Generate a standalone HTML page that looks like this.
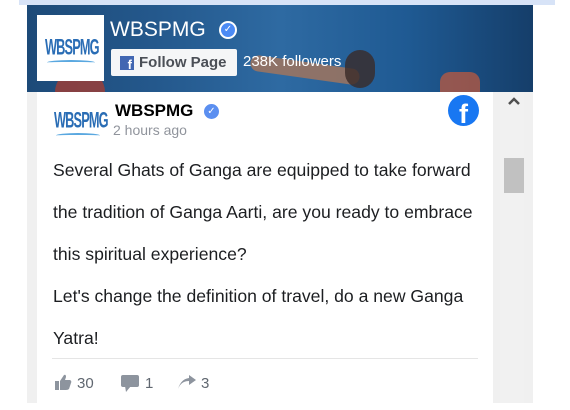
<!DOCTYPE html>
<html><head><style>
*{margin:0;padding:0;box-sizing:border-box}
body{width:570px;height:410px;background:#fff;position:relative;overflow:hidden;font-family:"Liberation Sans",Arial,sans-serif}
.a{position:absolute}
</style></head><body>
<div class="a" style="left:19px;top:0;width:536px;height:5px;background:#d7e3f7"></div>
<div class="a" style="left:27px;top:5px;width:506px;height:398px;background:#f0f0f0"></div>
<div class="a" style="left:27px;top:5px;width:506px;height:87px;background:linear-gradient(90deg,#1d4a78 0%,#24588c 25%,#2e6aa2 50%,#1f5a93 75%,#153e6a 100%)"></div>
<div class="a" style="left:55px;top:70px;width:50px;height:22px;background:#b33a2a;border-radius:30px 30px 0 0;opacity:.7"></div>
<div class="a" style="left:250px;top:62px;width:110px;height:16px;background:#a8765a;border-radius:10px;transform:rotate(8deg);opacity:.8"></div>
<div class="a" style="left:345px;top:50px;width:30px;height:38px;background:#3a2a28;border-radius:15px;opacity:.8"></div>
<div class="a" style="left:440px;top:72px;width:40px;height:20px;background:#c75a3a;border-radius:10px 10px 0 0;opacity:.7"></div>
<div class="a" style="left:37px;top:15px;width:67px;height:66px;background:#fff"></div>
<div class="a" style="left:45px;top:35px;color:#2a6db5;font:bold 15px 'Liberation Sans Narrow','Liberation Sans',sans-serif;letter-spacing:-1px;transform:scale(.85,1.5);transform-origin:left top">WBSPMG</div>
<div class="a" style="left:47px;top:60px;width:48px;height:5px;border-top:2px solid #5aa8e0;border-radius:50%"></div>
<div class="a" style="left:110px;top:18px;color:#fff;font-size:21px">WBSPMG</div>
<div class="a" style="left:219px;top:21px;width:18px;height:18px;border-radius:50%;background:#fff"></div>
<div class="a" style="left:221px;top:23px;width:14px;height:14px;border-radius:50%;background:#4c8bf5;color:#fff;font-size:10px;text-align:center;line-height:14px">✓</div>
<div class="a" style="left:111px;top:49px;width:126px;height:27px;background:#f5f6f7;border-radius:2px"></div>
<div class="a" style="left:120px;top:56px;width:14px;height:14px;background:#4267b2;color:#fff;font:bold 13px 'Liberation Sans';text-align:right;padding-right:2px;line-height:17px;overflow:hidden">f</div>
<div class="a" style="left:139px;top:54px;color:#4b4f56;font:bold 15px 'Liberation Sans'">Follow Page</div>
<div class="a" style="left:243px;top:53px;color:#fff;font-size:15px">238K followers</div>
<div class="a" style="left:37px;top:92px;width:456px;height:311px;background:#fff"></div>
<div class="a" style="left:500px;top:92px;width:24px;height:311px;background:#f1f1f1"></div>
<div class="a" style="left:504px;top:158px;width:20px;height:35px;background:#c1c1c1"></div>
<svg class="a" style="left:508px;top:97px" width="12" height="8"><path d="M1 7 L6 2 L11 7" fill="none" stroke="#505050" stroke-width="2.5"/></svg>
<div class="a" style="left:54px;top:108px;color:#2a6db5;font:bold 15px 'Liberation Sans Narrow','Liberation Sans',sans-serif;letter-spacing:-1px;transform:scale(.85,1.5);transform-origin:left top">WBSPMG</div>
<div class="a" style="left:56px;top:133px;width:44px;height:5px;border-top:2px solid #5aa8e0;border-radius:50%"></div>
<div class="a" style="left:115px;top:101px;color:#000;font:bold 17px 'Liberation Sans'">WBSPMG</div>
<div class="a" style="left:204px;top:104px;width:15px;height:15px;border-radius:50%;background:#5b8ff0;color:#fff;font-size:10px;text-align:center;line-height:15px">✓</div>
<div class="a" style="left:113px;top:122px;color:#90949c;font-size:14px">2 hours ago</div>
<div class="a" style="left:448px;top:95px;width:31px;height:31px;border-radius:50%;background:#1877f2;color:#fff;font:bold 27px 'Liberation Sans';text-align:center;line-height:38px;overflow:hidden">f</div>
<div class="a" style="left:53px;top:149px;color:#1c1e21;font-size:17.6px;line-height:42px;width:440px;white-space:nowrap">Several Ghats of Ganga are equipped to take forward<br>the tradition of Ganga Aarti, are you ready to embrace<br>this spiritual experience?<br>Let's change the definition of travel, do a new Ganga<br>Yatra!</div>
<div class="a" style="left:52px;top:358px;width:426px;height:1px;background:#e5e5e5"></div>
<svg class="a" style="left:55px;top:374px" width="17" height="16" viewBox="0 0 17 16"><rect x="0" y="7" width="4" height="9" fill="#8d949e"/><path d="M5 7 L9 1 Q11 0 11 3 L10 6 L15 6 Q17 7 16 9 L14 15 Q13 16 11 16 L5 16 Z" fill="#8d949e"/></svg>
<div class="a" style="left:77px;top:375px;color:#606770;font-size:15px">30</div>
<svg class="a" style="left:121px;top:375px" width="18" height="17" viewBox="0 0 18 17"><rect x="0" y="0" width="18" height="12" rx="2" fill="#8d949e"/><path d="M4 11 L5 17 L10 11 Z" fill="#8d949e"/></svg>
<div class="a" style="left:145px;top:375px;color:#606770;font-size:15px">1</div>
<svg class="a" style="left:178px;top:375px" width="18" height="14" viewBox="0 0 18 14"><path d="M0 14 Q3 6 11 6 L11 10 L18 5 L11 0 L11 3 Q3 4 0 14 Z" fill="#8d949e"/></svg>
<div class="a" style="left:201px;top:375px;color:#606770;font-size:15px">3</div>
</body></html>
